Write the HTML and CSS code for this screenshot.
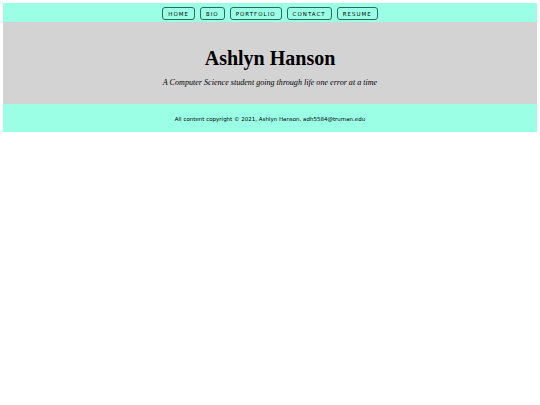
FILE: index.html
```html
<!DOCTYPE html>
<html>
<head>
<meta charset="utf-8">
<link rel="stylesheet" href="styles.css">
</head>
<body>
<div class="page">
  <nav class="nav">
    <a class="btn" href="#">HOME</a>
    <a class="btn" href="#">BIO</a>
    <a class="btn" href="#">PORTFOLIO</a>
    <a class="btn" href="#">CONTACT</a>
    <a class="btn" href="#">RESUME</a>
  </nav>
  <header class="hero">
    <h1 class="title">Ashlyn Hanson</h1>
    <p class="tagline">A Computer Science student going through life one error at a time</p>
  </header>
  <footer class="foot">All content copyright © 2021, Ashlyn Hanson. adh5584@truman.edu</footer>
</div>
</body>
</html>
```
FILE: styles.css
```css
html, body { margin: 0; padding: 0; background: #fff; }
body { padding: 3px; }
.page { width: 534px; }
.nav {
  background: #9bffe6;
  height: 19px;
  display: flex;
  justify-content: center;
  align-items: center;
  gap: 5px;
  padding-top: 1px;
  box-sizing: border-box;
}
.btn {
  font-family: "DejaVu Sans", sans-serif;
  font-size: 5.5px;
  letter-spacing: 1px;
  color: #000;
  text-decoration: none;
  border: 1px solid #2a6b5e;
  border-radius: 3px;
  height: 11px;
  line-height: 12px;
  padding: 0 5px;
}
.hero {
  background: #d3d3d3;
  height: 82px;
  display: flex;
  flex-direction: column;
  align-items: center;
  padding-top: 24px;
  box-sizing: border-box;
}
.title {
  font-family: "Liberation Serif", serif;
  font-weight: bold;
  font-size: 20px;
  line-height: 24px;
  margin: 0;
}
.tagline {
  font-family: "Liberation Serif", serif;
  font-style: italic;
  font-size: 8.1px;
  margin: 8px 0 0;
}
.foot {
  background: #9bffe6;
  height: 28px;
  display: flex;
  align-items: center;
  justify-content: center;
  padding-top: 2px;
  box-sizing: border-box;
  font-family: "DejaVu Sans", sans-serif;
  font-size: 5.5px;
  color: #000;
}
```
